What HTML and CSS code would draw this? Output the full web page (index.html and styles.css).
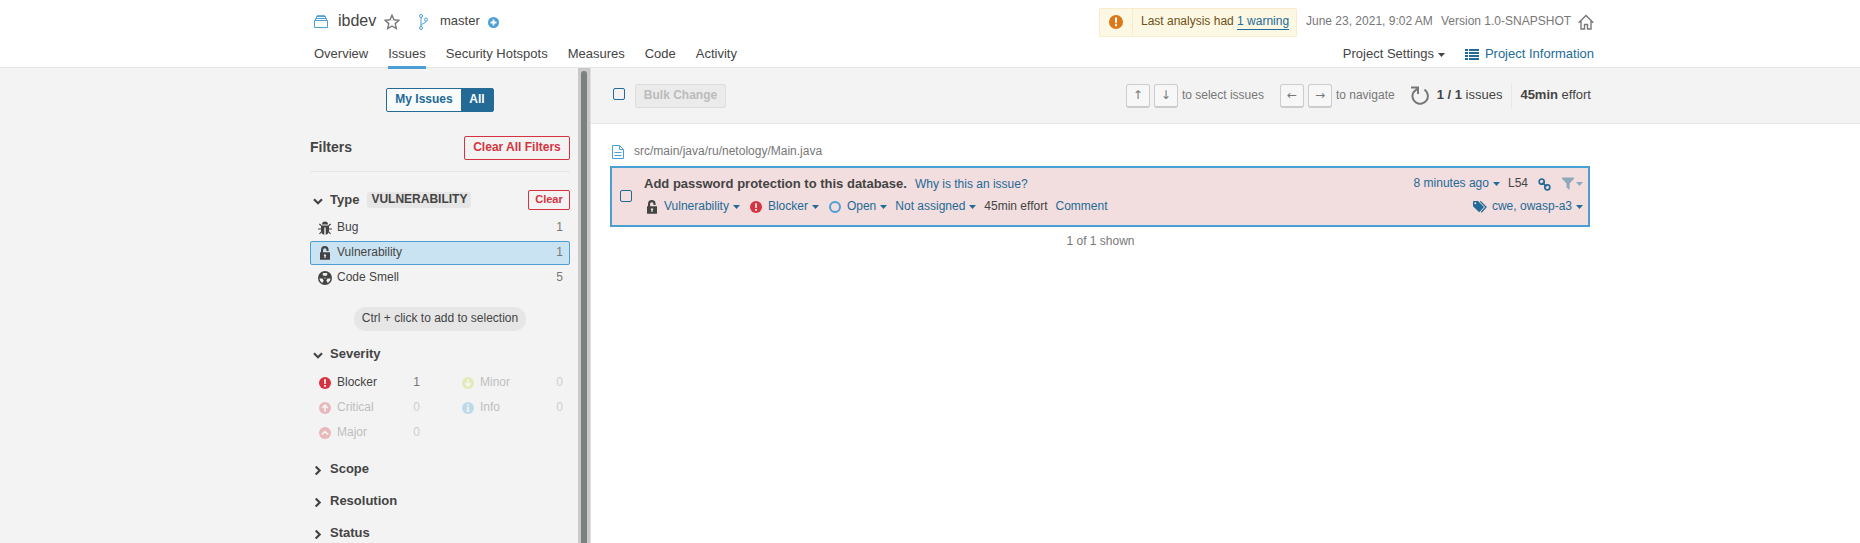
FILE: index.html
```html
<!DOCTYPE html>
<html lang="en">
<head>
<meta charset="utf-8">
<title>ibdev - Issues</title>
<link rel="stylesheet" href="styles.css">
</head>
<body>
<svg width="0" height="0" class="defs">
  <symbol id="caret" viewBox="0 0 7 4"><path d="M0 0h7L3.5 4z" fill="currentColor"/></symbol>
  <symbol id="lock" viewBox="0 0 12 14"><path fill="currentColor" fill-rule="evenodd" d="M2 6.300V3.900a3.800 3.800 0 0 1 7.600 0v1.200H7.500V4a1.700 1.700 0 0 0-3.400 0v2.300H11v7.400H1V6.300zM6 8.200a1.200 1.200 0 0 0-.6 2.200v1.500h1.200v-1.500A1.200 1.200 0 0 0 6 8.200z"/></symbol>
  <symbol id="bang" viewBox="0 0 12 12"><circle cx="6" cy="6" r="6" fill="currentColor"/><path fill="#fff" d="M5.1 2.2h1.8l-.2 4.9H5.3zM5.1 8h1.8v1.7H5.1z"/></symbol>
  <symbol id="chev" viewBox="0 0 10 7"><path d="M1 1.2l4 4 4-4" fill="none" stroke="currentColor" stroke-width="2.2"/></symbol>
</svg>

<header class="header">
  <div class="inner">
    <div class="row top">
      <svg class="project" viewBox="0 0 14 13" width="14" height="13"><path d="M.5 5.500h13v7H.5zM1.500 5V3.500h11V5M2.500 3V1.500h9V3M3 .3h8" fill="none" stroke="#4b9fd5"/></svg>
      <span class="name">ibdev</span>
      <svg class="star" viewBox="0 0 16 16" width="16" height="16"><path d="M8 1.200l2 4.600 5 .5-3.800 3.300 1.100 5L8 12l-4.300 2.600 1.100-5L1 6.300l5-.5z" fill="none" stroke="#777" stroke-width="1.400"/></svg>
      <svg class="branch" viewBox="0 0 10 16" width="10" height="16"><g fill="none" stroke="#4b9fd5"><circle cx="3" cy="2" r="1.500"/><circle cx="3" cy="14" r="1.500"/><circle cx="8" cy="5.500" r="1.500"/><path d="M3 3.500v9M8 7c0 3-4 1.500-5 4.500"/></g></svg>
      <span class="bname">master</span>
      <svg class="plus" viewBox="0 0 10 10" width="11" height="11"><circle cx="5" cy="5" r="5" fill="#4b9fd5"/><path d="M5 2.300v5.400M2.300 5h5.400" stroke="#fff" stroke-width="1.600"/></svg>
      <div class="warning">
        <span class="warn-icon"><svg width="14" height="14"><use href="#bang"/></svg></span>
        <span class="warn-text">Last analysis had <a>1 warning</a></span>
      </div>
      <span class="date">June 23, 2021, 9:02 AM</span>
      <span class="version">Version 1.0-SNAPSHOT</span>
      <svg class="home" viewBox="0 0 16 16" width="16" height="16"><path d="M.7 8.700L8 1.400l7.300 7.300M3 7v8h3.500v-4.500h3V15H13V7" fill="none" stroke="#777" stroke-width="1.400"/></svg>
    </div>
    <nav class="row tabs">
      <a>Overview</a><a class="active">Issues</a><a>Security Hotspots</a><a>Measures</a><a>Code</a><a>Activity</a>
      <a class="settings">Project Settings <svg class="caret"><use href="#caret"/></svg></a>
      <a class="info"><svg viewBox="0 0 14 11" width="14" height="11"><path d="M0 1h3M4 1h10M0 4h3M4 4h10M0 7h3M4 7h10M0 10h3M4 10h10" stroke="currentColor" stroke-width="2"/></svg>Project Information</a>
    </nav>
  </div>
</header>

<div class="page">
  <aside class="side">
    <div class="panel">
      <div class="switch"><span>My Issues</span><span class="on">All</span></div>
      <div class="filters"><h2>Filters</h2><span class="red big">Clear All Filters</span></div>
      <div class="facet type"><svg class="chev"><use href="#chev"/></svg><h3>Type</h3><span class="tag">VULNERABILITY</span><span class="red small">Clear</span></div>
      <div class="item"><svg class="ic" viewBox="0 0 14 14"><g fill="none" stroke="#444" stroke-width="1.200"><path d="M3.500 4.800L1.300 3M10.500 4.800L12.700 3M3 8H0M11 8h3M3.500 10.500L1.500 13M10.500 10.500l2 2.500"/></g><path fill="#444" d="M4 3.600a3 3 0 0 1 6 0zM3 4.500h8v5c0 2.400-1.300 4-3.300 4.200V6.500H6.300v7.200C4.300 13.500 3 11.900 3 9.500z"/></svg><span>Bug</span><b>1</b></div>
      <div class="item sel"><svg class="ic"><use href="#lock"/></svg><span>Vulnerability</span><b>1</b></div>
      <div class="item"><svg class="ic" viewBox="0 0 14 14"><circle cx="7" cy="7" r="7" fill="#444"/><g fill="#f3f3f3"><path d="M5.300 2.100h3.400L9.600 3 8.300 5.100a2.300 2.300 0 0 0-2.600 0L4.400 3z" opacity=".95"/><path d="M1.400 7.600h3.200c.1.800.500 1.400 1.100 1.800l-1.500 2.600A5.700 5.700 0 0 1 1.400 7.600zM12.600 7.600H9.400c-.1.800-.5 1.400-1.100 1.800L9.800 12a5.700 5.700 0 0 0 2.800-4.400z"/><circle cx="7" cy="7.100" r=".6"/></g></svg><span>Code Smell</span><b>5</b></div>
      <div class="hint">Ctrl + click to add to selection</div>
      <div class="facet sev"><svg class="chev"><use href="#chev"/></svg><h3>Severity</h3></div>
      <div class="grid">
        <div class="item"><svg class="ic dot red-c"><use href="#bang"/></svg><span>Blocker</span><b>1</b></div>
        <div class="item off"><svg class="ic dot" viewBox="0 0 12 12"><circle cx="6" cy="6" r="6" fill="#c1d831"/><path d="M6 2.500v6M3.200 6L6 8.800 8.800 6" fill="none" stroke="#fff" stroke-width="1.600"/></svg><span>Minor</span><b>0</b></div>
        <div class="item off"><svg class="ic dot" viewBox="0 0 12 12"><circle cx="6" cy="6" r="6" fill="#d4333f"/><path d="M6 9.500v-6M3.200 6L6 3.200 8.800 6" fill="none" stroke="#fff" stroke-width="1.600"/></svg><span>Critical</span><b>0</b></div>
        <div class="item off"><svg class="ic dot" viewBox="0 0 12 12"><circle cx="6" cy="6" r="6" fill="#4b9fd5"/><path d="M6 2v1.700M4.800 5.500H6V9M4.600 9h2.800" fill="none" stroke="#fff" stroke-width="1.500"/></svg><span>Info</span><b>0</b></div>
        <div class="item off"><svg class="ic dot" viewBox="0 0 12 12"><circle cx="6" cy="6" r="6" fill="#d4333f"/><path d="M2.800 7.500L6 4.600l3.200 2.900" fill="none" stroke="#fff" stroke-width="1.600"/></svg><span>Major</span><b>0</b></div>
      </div>
      <div class="facet closed"><svg class="chev"><use href="#chev"/></svg><h3>Scope</h3></div>
      <div class="facet closed"><svg class="chev"><use href="#chev"/></svg><h3>Resolution</h3></div>
      <div class="facet closed"><svg class="chev"><use href="#chev"/></svg><h3>Status</h3></div>
    </div>
    <div class="track"><div class="thumb"></div></div>
  </aside>

  <main class="main">
    <div class="toolbar">
      <span class="check"></span><span class="bulk">Bulk Change</span>
      <span class="keys"><kbd>↑</kbd><kbd>↓</kbd><span>to select issues</span></span>
      <span class="keys nav"><kbd>←</kbd><kbd>→</kbd><span>to navigate</span></span>
      <svg class="reload" viewBox="0 0 18 19" width="18" height="19"><path d="M13.500 3.700A7.700 7.700 0 1 1 2.500 6.200L6.500 2.500" fill="none" stroke="#777" stroke-width="2"/><path d="M0 1.500h7V8" fill="none" stroke="#777" stroke-width="2"/></svg>
      <span class="count"><b>1 / 1</b> issues</span>
      <span class="effort"><b>45min</b> effort</span>
    </div>
    <div class="path"><svg viewBox="0 0 12 14" width="12" height="14"><path d="M.5.5h7l4 4v9H.5zM7.500.5v4h4M2.500 7.500h7M2.500 10.500h7" fill="none" stroke="#4b9fd5"/></svg><span>src/main/java/ru/netology/Main.java</span></div>
    <div class="issue">
      <span class="check"></span>
      <div class="body">
        <div class="line">
          <strong>Add password protection to this database.</strong><a class="why">Why is this an issue?</a>
          <a class="right">8 minutes ago<svg class="caret"><use href="#caret"/></svg></a>
          <span class="ln">L54</span>
          <svg class="link" viewBox="0 0 13 13" width="13" height="13"><g fill="none" stroke="#236a97" stroke-width="1.700"><rect x="1.200" y="1.200" width="5" height="5" rx="2.300"/><rect x="6.800" y="6.800" width="5" height="5" rx="2.300"/><path d="M4.500 4.500l4 4"/></g></svg>
          <span class="funnel"><svg viewBox="0 0 12 13" width="12" height="13"><path d="M0 .5h12v1.300L7.600 6.500V13L4.500 10.500v-4L0 1.800z" fill="currentColor"/></svg><svg class="caret"><use href="#caret"/></svg></span>
        </div>
        <div class="line second">
          <svg class="lock2"><use href="#lock"/></svg><a class="m1">Vulnerability<svg class="caret"><use href="#caret"/></svg></a>
          <svg class="dot red-c m2"><use href="#bang"/></svg><a class="m3">Blocker<svg class="caret"><use href="#caret"/></svg></a>
          <span class="ring"></span><a class="m3">Open<svg class="caret"><use href="#caret"/></svg></a>
          <a class="m4">Not assigned<svg class="caret"><use href="#caret"/></svg></a>
          <span class="m5">45min effort</span><a class="m6">Comment</a>
          <a class="right"><svg class="tags" viewBox="0 0 14 12" width="14" height="12"><path fill="currentColor" fill-rule="evenodd" d="M0 1.200C0 .5.500 0 1.200 0H5l6 6-4.800 5.300L0 5.200zM2.300 1.300a1 1 0 1 0 0 2 1 1 0 0 0 0-2z"/><path d="M7.300.4l5.700 5.600-4.700 5.300" fill="none" stroke="currentColor" stroke-width="1.300"/></svg>cwe, owasp-a3<svg class="caret"><use href="#caret"/></svg></a>
        </div>
      </div>
    </div>
    <div class="shown">1 of 1 shown</div>
  </main>
</div>
</body>
</html>
```
FILE: styles.css
```css
* { box-sizing: border-box; }
body { margin: 0; height: 543px; overflow: hidden; background: #fff; color: #444; font: 12px/16px "Liberation Sans", Arial, sans-serif; }
svg { flex: none; display: block; }
.defs { position: absolute; }
h2, h3 { margin: 0; font-size: 13px; line-height: 16px; }
a { color: #236a97; }
span, a { white-space: nowrap; }
.header { height: 68px; border-bottom: 1px solid #e6e6e6; position: relative; z-index: 1; }
.inner { margin-left: 314px; width: 1280px; }
.row { display: flex; align-items: center; }
.top { height: 42px; }
.project { margin-top: 1px; }
.name { font-size: 16px; line-height: 20px; margin: -1px 0 0 10px; width: 38px; }
.star { margin: 2px 0 0 8px; }
.branch { margin: 2px 0 0 18px; }
.bname { margin-left: 12px; width: 39px; font-size: 13px; }
.plus { margin: 2px 0 0 9px; }
.warning { margin: 2px 0 0 auto; height: 29px; width: 198px; display: flex; background: #fcf8e3; border: 1px solid #faebcc; color: #6f4f17; border-radius: 2px; }
.warn-icon { width: 33px; border-right: 1px solid #faebcc; display: flex; align-items: center; justify-content: center; color: #db781a; }
.warn-text { padding: 4px 0 0 8px; }
.warn-text a { border-bottom: 1px solid #236a97; display: inline-block; height: 17px; }
.date { color: #777; margin-left: 9px; width: 127px; }
.version { color: #777; margin-left: 8px; width: 129px; }
.home { margin: 2px 0 0 8px; }
.tabs { height: 27px; gap: 20px; font-size: 13px; }
.tabs a { color: #444; height: 27px; padding-top: 4px; }
.tabs .active { border-bottom: 3px solid #4b9fd5; }
.tabs .settings { margin-left: auto; display: flex; align-items: center; gap: 4px; padding-bottom: 7px; }
.tabs .info { color: #236a97; display: flex; align-items: center; gap: 6px; padding-bottom: 7px; }
.caret { width: 7px; height: 4px; margin-top: 2px; }
.page { display: flex; height: 475px; }
.side { width: 591px; background: #f3f3f3; display: flex; justify-content: flex-end; overflow: hidden; }
.panel { width: 260px; margin-right: 8px; }
.track { width: 13px; background: #c9c9c9; border-right: 1px solid #e0e0e0; padding: 3px 3px 0; }
.thumb { height: 490px; width: 6px; border-radius: 3px; background: #7b8081; }
.switch { margin: 20px 0 0 76px; width: 108px; height: 24px; border: 1px solid #236a97; border-radius: 2px; display: flex; font-weight: bold; color: #236a97; line-height: 21px; text-align: center; background: #f8fafb; }
.switch span { width: 74px; }
.switch .on { width: 32px; background: #236a97; color: #fff; }
.filters { margin-top: 24px; height: 36px; display: flex; justify-content: space-between; border-bottom: 1px solid #e6e6e6; }
.filters h2 { font-size: 14px; padding-top: 3px; }
.red { border: 1px solid #d4333f; color: #d4333f; border-radius: 2px; font-weight: bold; text-align: center; }
.big { width: 106px; height: 24px; line-height: 21px; }
.small { width: 42px; height: 20px; line-height: 17px; font-size: 11px; margin-left: auto; }
.facet { display: flex; align-items: center; height: 20px; }
.facet h3 { margin-left: 7px; margin-top: -1px; }
.chev { width: 10px; height: 7px; margin-left: 3px; margin-top: 2px; }
.type { margin-top: 18px; }
.tag { margin: -1px 0 0 8px; background: #e6e6e6; border-radius: 3px; width: 104px; height: 16px; text-align: center; line-height: 15px; font-weight: bold; }
.item { display: flex; align-items: center; height: 24px; margin-bottom: 1px; padding: 0 7px 0 8px; line-height: 20px; }
.item span { margin: -3px 0 0 5px; }
.item b { margin: -3px 0 0 auto; font-weight: normal; color: #777; }
.type + .item { margin-top: 6px; }
.item.sel { background: #cae3f2; border: 1px solid #4b9fd5; border-radius: 2px; padding: 0 6px 0 7px; }
.ic { width: 14px; height: 14px; }
.hint { margin: 17px 0 0 44px; width: 172px; height: 24px; border-radius: 12px; background: #e6e6e6; text-align: center; line-height: 22px; }
.sev { margin-top: 13px; }
.grid { display: grid; grid-template-columns: 117px 117px; column-gap: 26px; margin-top: 7px; }
.grid .item { padding-right: 0; padding-left: 9px; }
.grid .item .ic { width: 12px; height: 12px; margin-right: 1px; }
.grid .item b { margin-right: 7px; }
.red-c { color: #d4333f; }
.off { opacity: .3; }
.closed { margin-bottom: 12px; }
.grid + .closed { margin-top: 13px; }
.closed .chev { transform: rotate(-90deg); }
.main { flex: 1; }
.toolbar { height: 56px; background: #f3f3f3; border-bottom: 1px solid #e6e6e6; display: flex; align-items: center; padding: 0 269px 0 22px; }
.check { width: 12px; height: 12px; border: 1px solid #236a97; border-radius: 2px; flex: none; }
.toolbar .check { margin-top: -3px; }
.bulk { margin-left: 10px; width: 91px; height: 24px; border: 1px solid #ddd; border-radius: 2px; background: #ebebeb; color: #bbb; font-weight: bold; text-align: center; line-height: 21px; }
.keys { margin-left: auto; display: flex; align-items: center; gap: 4px; color: #777; }
.keys.nav { margin-left: 16px; }
.keys span { margin-top: -2px; }
kbd { width: 24px; height: 24px; border: 1px solid #ccc; border-bottom-width: 2px; border-radius: 3px; background: #f7f7f7; text-align: center; font: 12px/20px "DejaVu Sans", sans-serif; margin-top: 1px; }
.reload { margin-left: 16px; }
.count { margin: -2px 0 0 8px; font-size: 13px; }
.effort { margin-left: 9px; padding-left: 8px; border-left: 1px solid #e6e6e6; height: 24px; line-height: 22px; font-size: 13px; }
.path { display: flex; align-items: center; gap: 10px; margin: 19px 0 0 21px; height: 18px; color: #777; }
.path span { margin-top: -2px; }
.issue { margin: 5px 0 0 19px; width: 980px; height: 61px; border: 2px solid #4b9fd5; background: #f2dede; display: flex; align-items: center; padding: 0 5px 0 8px; }
.issue .check { margin-top: -2px; }
.body { flex: 1; margin-left: 12px; height: 57px; padding-top: 7px; }
.line { display: flex; align-items: center; height: 16px; }
.line a { display: flex; align-items: center; }
.line .caret { margin-left: 4px; }
.line strong { font-size: 13px; margin-top: 2px; }
.line .why { margin: 2px 0 0 8px; }
.right { margin-left: auto; }
.ln { margin-left: 8px; }
.link { margin: 3px 0 0 10px; }
.funnel { display: flex; align-items: center; margin-left: 11px; color: #8fa9ba; }
.funnel .caret { margin-left: 2px; }
.second { margin-top: 7px; }
.lock2 { width: 14px; height: 14px; margin: 2px 0 0 1px; }
.m1 { margin-left: 5px; }
.dot { width: 12px; height: 12px; }
.m2, .ring { margin: 2px 0 0 10px; }
.ring { width: 12px; height: 12px; border: 2px solid #4b9fd5; border-radius: 50%; }
.m3 { margin-left: 6px; }
.m4, .m5, .m6 { margin-left: 8px; }
.tags { margin: 2px 5px 0 0; }
.shown { color: #777; text-align: center; margin: 6px 259px 0 0; padding-left: 9px; }
```
